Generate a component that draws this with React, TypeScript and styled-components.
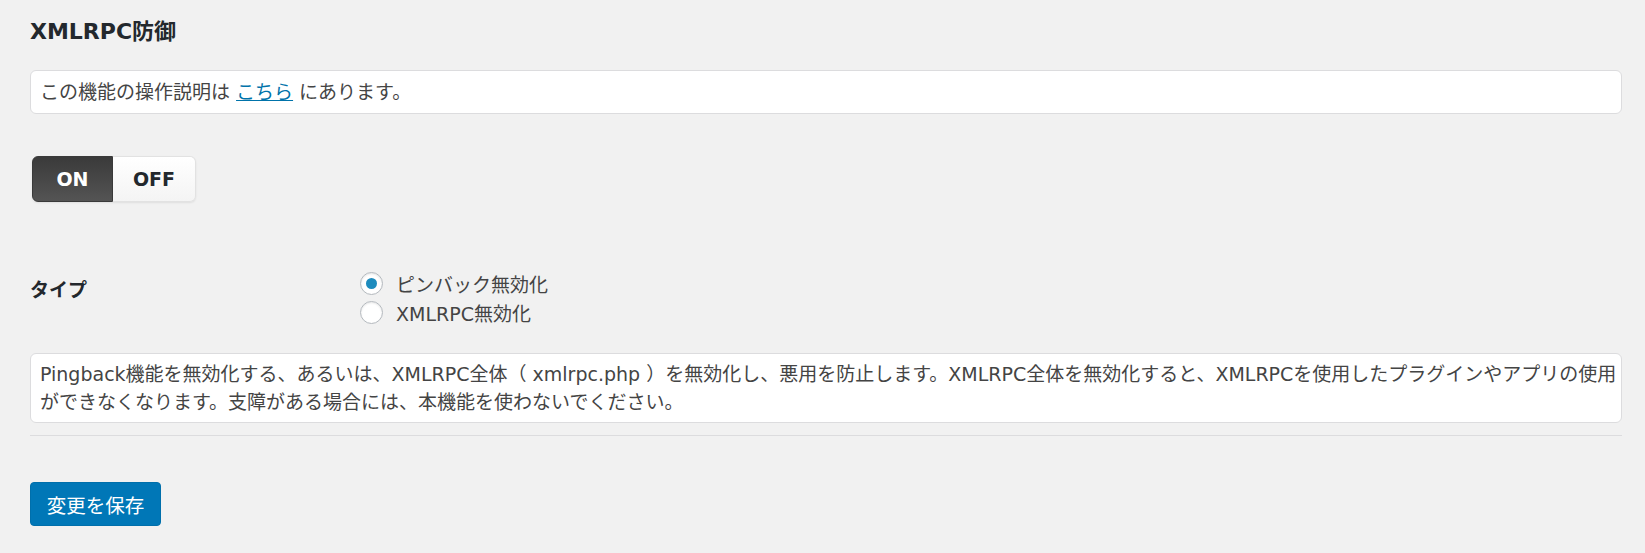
import * as React from 'react'
import styled, { createGlobalStyle } from 'styled-components'

const GlobalStyle = createGlobalStyle`
  body {
    margin: 0;
    background: #f1f1f1;
    font-family: "DejaVu Sans", "Noto Sans CJK JP", sans-serif;
    color: #444;
  }
`

const Page = styled.div`
  width: 1592px;
  padding: 18px 0 30px 30px;
`

const Title = styled.h2`
  margin: 0;
  font-size: 22px;
  line-height: 28px;
  font-weight: 700;
  color: #23282d;
`

const InfoBox = styled.div<{ $top: number; $padY: number }>`
  margin-top: ${(p) => p.$top}px;
  background: #fff;
  border: 1px solid #dcdcde;
  border-radius: 6px;
  padding: ${(p) => p.$padY}px 9px;
  font-size: 19px;
  line-height: 28px;
  white-space: nowrap;
`

const Link = styled.a`
  color: #0073aa;
  text-decoration: underline;
`

const Toggle = styled.div`
  margin: 42px 0 0 2px;
  display: inline-flex;
  height: 46px;
  border-radius: 6px;
  box-shadow: 0 1px 2px rgba(0, 0, 0, 0.08);
`

const ToggleButton = styled.button<{ $active?: boolean; $width: number }>`
  width: ${(p) => p.$width}px;
  height: 46px;
  font-family: inherit;
  font-size: 19px;
  font-weight: 700;
  padding: 0;
  cursor: pointer;
  border: 1px solid ${(p) => (p.$active ? '#3a3a3a' : '#e2e2e2')};
  color: ${(p) => (p.$active ? '#fff' : '#23282d')};
  background: ${(p) =>
    p.$active
      ? 'linear-gradient(#3a3a3a, #545454)'
      : 'linear-gradient(#ffffff, #f4f4f4)'};
  &:first-child {
    border-radius: 6px 0 0 6px;
  }
  &:last-child {
    border-radius: 0 6px 6px 0;
    border-left: none;
  }
`

const TypeRow = styled.div`
  margin-top: 67px;
  display: grid;
  grid-template-columns: 330px 1fr;
`

const RowLabel = styled.div`
  padding-top: 7px;
  font-size: 19px;
  line-height: 29px;
  font-weight: 700;
  color: #23282d;
`

const RadioList = styled.div`
  display: flex;
  flex-direction: column;
`

const RadioRow = styled.label`
  display: flex;
  align-items: center;
  gap: 13px;
  height: 29px;
  font-size: 19px;
  cursor: pointer;
`

const RadioCircle = styled.span<{ $checked?: boolean }>`
  width: 23px;
  height: 23px;
  box-sizing: border-box;
  border-radius: 50%;
  border: 1.5px solid #b4b9be;
  background: #fff;
  box-shadow: inset 0 1px 2px rgba(0, 0, 0, 0.1);
  display: flex;
  align-items: center;
  justify-content: center;
  &::after {
    content: '';
    width: 11px;
    height: 11px;
    border-radius: 50%;
    background: #1e8cbe;
    display: ${(p) => (p.$checked ? 'block' : 'none')};
  }
`

const Separator = styled.hr`
  margin: 12px 0 0;
  border: none;
  border-top: 1px solid #dcdcde;
`

const SaveButton = styled.button`
  margin-top: 46px;
  width: 131px;
  height: 44px;
  border: 1px solid #006fab;
  border-radius: 4px;
  background: #0077b7;
  color: #fff;
  font-family: inherit;
  font-size: 19.5px;
  cursor: pointer;
`

const types = ['ピンバック無効化', 'XMLRPC無効化']

const App = () => {
  const [enabled, setEnabled] = React.useState(true)
  const [type, setType] = React.useState(0)

  return (
    <Page>
      <GlobalStyle />
      <Title>XMLRPC防御</Title>
      <InfoBox $top={24} $padY={7}>
        この機能の操作説明は <Link href="#">こちら</Link> にあります。
      </InfoBox>
      <Toggle>
        <ToggleButton $width={81} $active={enabled} onClick={() => setEnabled(true)}>
          ON
        </ToggleButton>
        <ToggleButton $width={83} $active={!enabled} onClick={() => setEnabled(false)}>
          OFF
        </ToggleButton>
      </Toggle>
      <TypeRow>
        <RowLabel>タイプ</RowLabel>
        <RadioList>
          {types.map((t, i) => (
            <RadioRow key={t} onClick={() => setType(i)}>
              <RadioCircle $checked={type === i} />
              {t}
            </RadioRow>
          ))}
        </RadioList>
      </TypeRow>
      <InfoBox $top={26} $padY={6}>
        Pingback機能を無効化する、あるいは、XMLRPC全体（ xmlrpc.php ）を無効化し、悪用を防止します。XMLRPC全体を無効化すると、XMLRPCを使用したプラグインやアプリの使用
        <br />
        ができなくなります。支障がある場合には、本機能を使わないでください。
      </InfoBox>
      <Separator />
      <SaveButton>変更を保存</SaveButton>
    </Page>
  )
}

export default App
